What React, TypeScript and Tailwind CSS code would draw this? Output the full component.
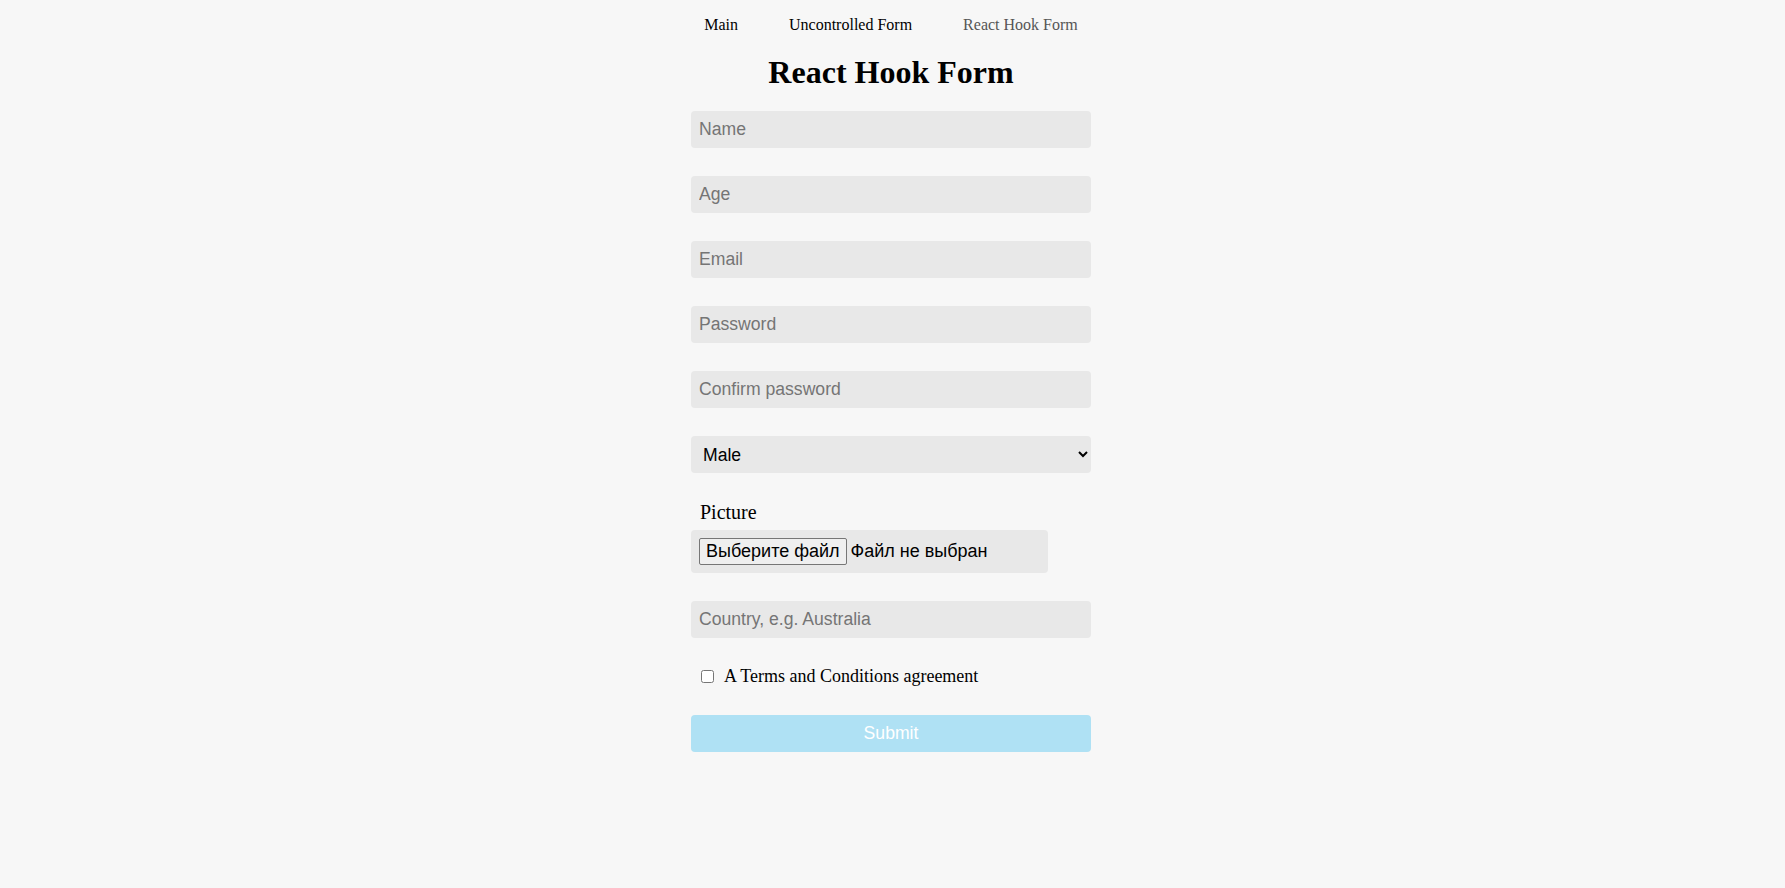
import React from "react";

const inputCls =
  "w-full h-[37px] px-[8px] rounded-[4px] bg-[#e8e8e8] font-['Liberation_Sans',Arial,sans-serif] text-[17.6px] text-black placeholder:text-[#757575] outline-none";

export default function App() {
  return (
    <div className="min-h-[888px] w-full bg-[#f7f7f7] pr-[3px] font-['Liberation_Serif','Times_New_Roman',serif] leading-[normal] text-black">
      <nav className="flex h-[35px] justify-center gap-[51px] pt-[16px] text-[16px]">
        <a className="text-black">Main</a>
        <a className="text-black">Uncontrolled Form</a>
        <a className="text-[#555555]">React Hook Form</a>
      </nav>
      <h1 className="mt-[19px] text-center text-[32px] font-bold leading-[37px]">React Hook Form</h1>
      <form className="mx-auto mt-[20px] flex w-[400px] flex-col gap-[28px] font-['Liberation_Sans',Arial,sans-serif]">
        <input className={inputCls} placeholder="Name" />
        <input className={inputCls} placeholder="Age" />
        <input className={inputCls} placeholder="Email" />
        <input className={inputCls} placeholder="Password" type="password" />
        <input className={inputCls} placeholder="Confirm password" type="password" />
        <select
          className="h-[37px] w-full rounded-[4px] bg-[#e8e8e8] px-[8px] font-['Liberation_Sans',Arial,sans-serif] text-[17.6px] text-black outline-none"
          defaultValue="male"
        >
          <option value="male">Male</option>
          <option value="female">Female</option>
        </select>
        <div className="flex flex-col">
          <label className="mb-[6px] pl-[9px] font-['Liberation_Serif','Times_New_Roman',serif] text-[20px] leading-[23px]">
            Picture
          </label>
          <label className="flex h-[43px] w-[357px] cursor-pointer items-center rounded-[4px] bg-[#e8e8e8] px-[8px] text-[18px] text-black">
            <input type="file" className="hidden" />
            <span className="flex h-[27px] items-center rounded-[2px] border border-solid border-[#767676] bg-[#efefef] px-[6px]">
              Выберите файл
            </span>
            <span className="ml-[4px]">Файл не выбран</span>
          </label>
        </div>
        <input className={inputCls} placeholder="Country, e.g. Australia" />
        <label className="flex h-[21px] items-center gap-[10px] pl-[10px] font-['Liberation_Serif','Times_New_Roman',serif] text-[18px]">
          <input type="checkbox" className="h-[13px] w-[13px]" />
          <span>A Terms and Conditions agreement</span>
        </label>
        <button
          type="submit"
          disabled
          className="h-[37px] w-full rounded-[4px] bg-[#afe1f4] font-['Liberation_Sans',Arial,sans-serif] text-[17.6px] text-white"
        >
          Submit
        </button>
      </form>
    </div>
  );
}
